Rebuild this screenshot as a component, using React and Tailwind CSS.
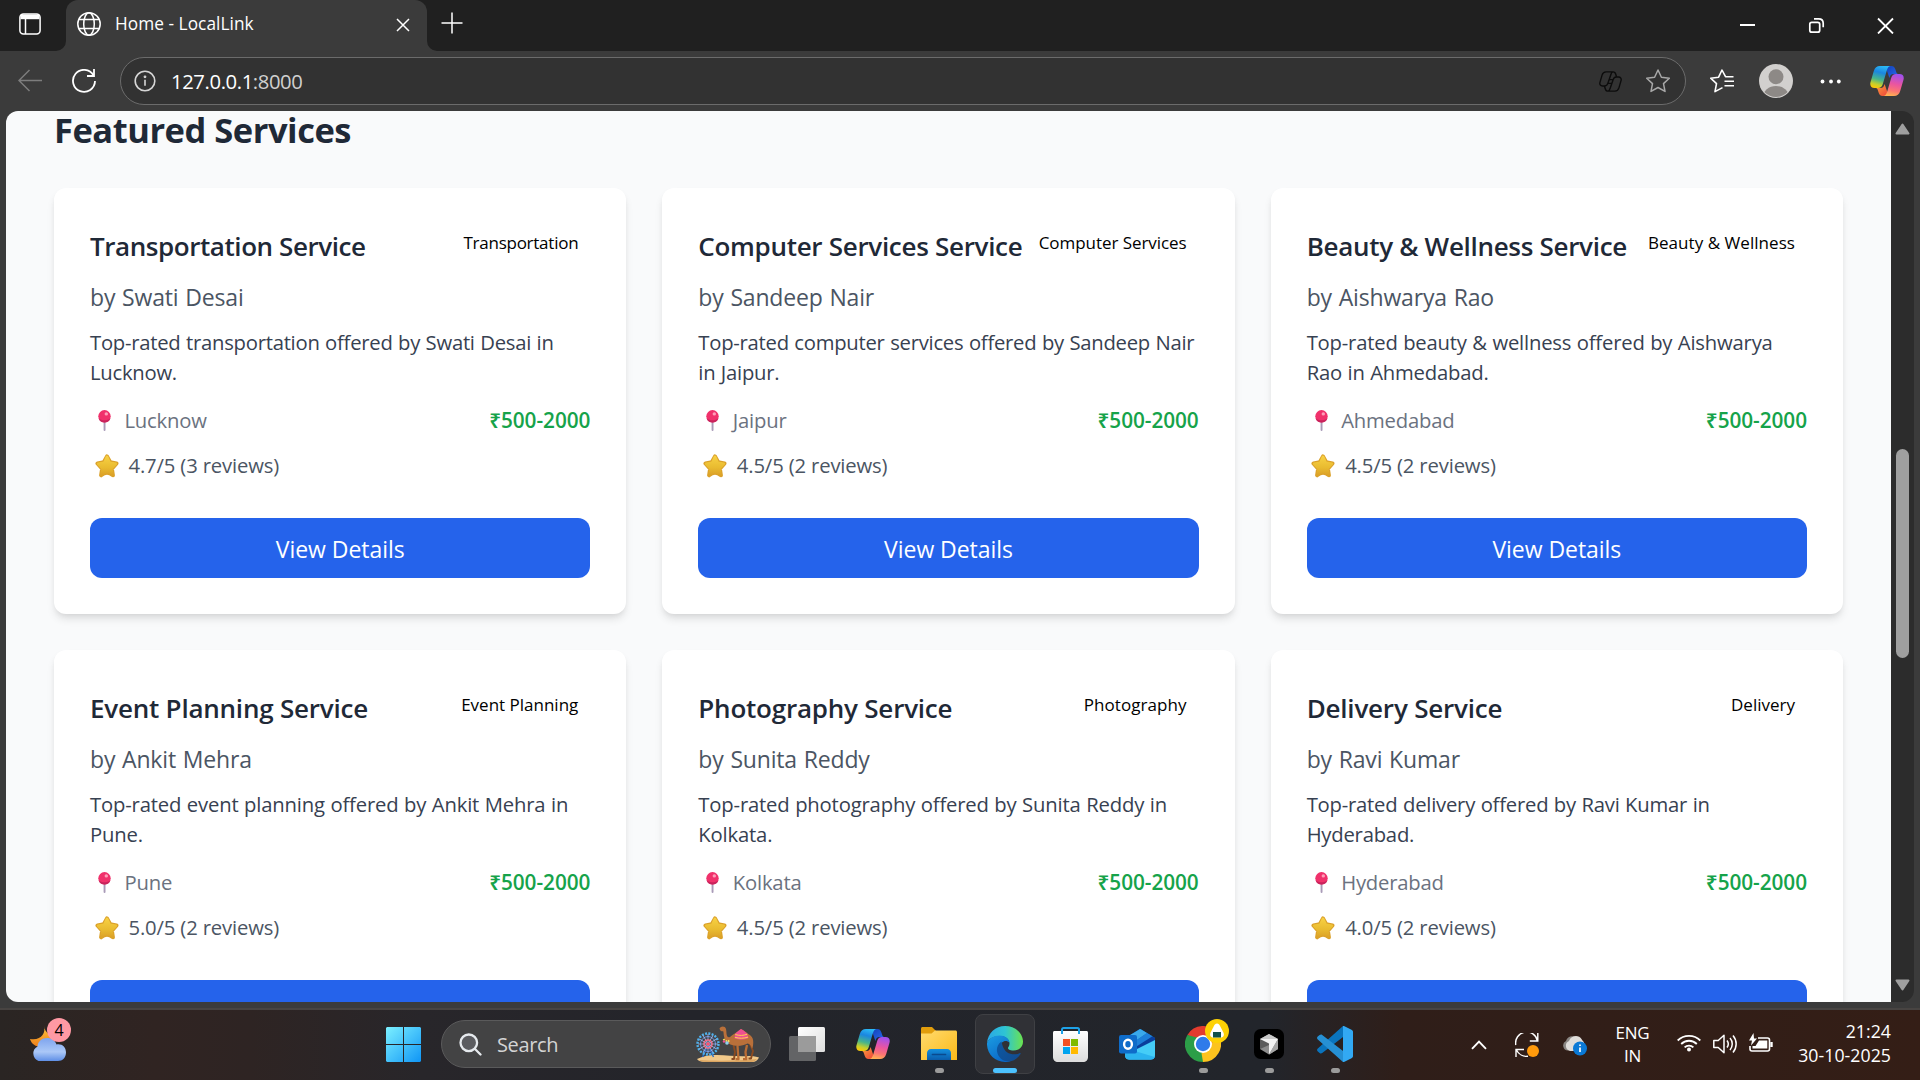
import React, { useId } from "react";

const services = [
  { category: "Transportation", provider: "Swati Desai", city: "Lucknow", rating: "4.7", reviews: 3, title: "tracking-[-0.43px]", badge: "tracking-[-0.25px]", body: "tracking-[-0.25px]" },
  { category: "Computer Services", provider: "Sandeep Nair", city: "Jaipur", rating: "4.5", reviews: 2, title: "tracking-[-0.3px]", badge: "tracking-[-0.05px]", body: "tracking-[-0.25px]" },
  { category: "Beauty & Wellness", provider: "Aishwarya Rao", city: "Ahmedabad", rating: "4.5", reviews: 2, title: "tracking-[-0.3px]", badge: "tracking-[0.05px]", body: "tracking-[-0.2px]" },
  { category: "Event Planning", provider: "Ankit Mehra", city: "Pune", rating: "5.0", reviews: 2, title: "tracking-[-0.22px]", badge: "tracking-[0px]", body: "tracking-[-0.17px]" },
  { category: "Photography", provider: "Sunita Reddy", city: "Kolkata", rating: "4.5", reviews: 2, title: "tracking-[-0.22px]", badge: "tracking-[0.08px]", body: "tracking-[-0.17px]" },
  { category: "Delivery", provider: "Ravi Kumar", city: "Hyderabad", rating: "4.0", reviews: 2, title: "tracking-[-0.2px]", badge: "tracking-[0px]", body: "tracking-[-0.22px]" },
];

/* ---------- icons ---------- */

function Copilot({ className }) {
  const id = useId();
  return (
    <svg viewBox="0 0 34 30" className={className}>
      <defs>
        <linearGradient id={id + "a"} x1="0.6" y1="0" x2="0.35" y2="1">
          <stop offset="0" stopColor="#2bb8f5" />
          <stop offset="0.3" stopColor="#1b86e0" />
          <stop offset="0.62" stopColor="#48b58a" />
          <stop offset="0.85" stopColor="#c6cf2c" />
          <stop offset="1" stopColor="#f8c80c" />
        </linearGradient>
        <linearGradient id={id + "b"} x1="0.6" y1="0" x2="0.4" y2="1">
          <stop offset="0" stopColor="#a050ee" />
          <stop offset="0.45" stopColor="#ea55a0" />
          <stop offset="0.75" stopColor="#fb7474" />
          <stop offset="1" stopColor="#ffb152" />
        </linearGradient>
        <linearGradient id={id + "c"} x1="0" y1="0" x2="1" y2="1">
          <stop offset="0" stopColor="#123fb5" />
          <stop offset="1" stopColor="#2a6cf0" />
        </linearGradient>
        <linearGradient id={id + "d"} x1="0" y1="0" x2="1" y2="1">
          <stop offset="0" stopColor="#fba43c" />
          <stop offset="1" stopColor="#ee3f3a" />
        </linearGradient>
      </defs>
      <path d="M15 0h6.500c2.200 0 3.300 1.400 4 3.700l.8 2.500c.4 1.200 1.100 1.800 2.300 1.800h-5c-2.600 0-3.500 1.500-4.200 4L17 5z" fill={`url(#${id}c)`} />
      <path d="M19 30h-6.500c-2.200 0-3.300-1.400-4-3.700l-.8-2.500C7.300 22.600 6.600 22 5.400 22h5c2.600 0 3.500-1.500 4.200-4L17 25z" fill={`url(#${id}d)`} />
      <path d="M10 0h10.500c-2.200.5-3 2.300-3.700 4.500L12.800 18c-.8 2.600-2.200 4-4.800 4H4.500C1.200 22-.4 19.600.5 16.300L3.800 5C4.800 1.700 6.900 0 10 0z" fill={`url(#${id}a)`} />
      <path d="M24 30H13.500c2.200-.5 3-2.300 3.700-4.500L21.200 12c.8-2.600 2.200-4 4.800-4h3.500c3.300 0 4.900 2.400 4 5.700L30.200 25c-1 3.300-3.100 5-6.200 5z" fill={`url(#${id}b)`} />
    </svg>
  );
}

function CopilotOutline() {
  return (
    <svg viewBox="-1 -1 36 32" className="h-[21px] w-[23px]" fill="none" stroke="#0c0c0c" strokeWidth="2.200" strokeLinejoin="round">
      <path d="M10 0h11c2.500 0 3.500 1.200 4.200 3.700L26.500 8M17.500 4.500 12.800 18c-.8 2.600-2.200 4-4.800 4H4.500C1.200 22-.4 19.600.5 16.300L3.800 5C4.800 1.700 6.900 0 10 0M20.500 0c-2 .6-2.600 2.700-3 4.500" />
      <path d="M24 30H13c-2.500 0-3.500-1.200-4.200-3.700L7.500 22M16.500 25.500 21.200 12c.8-2.600 2.200-4 4.800-4h3.500c3.300 0 4.900 2.400 4 5.700L30.200 25c-1 3.300-3.100 5-6.200 5M13.500 30c2-.6 2.600-2.700 3-4.500M13 18h6M15 12h6" />
    </svg>
  );
}

function PinEmoji() {
  return (
    <svg viewBox="0 0 13 21" className="h-[21px] w-[13px]">
      <rect x="5.600" y="11" width="1.900" height="10" rx=".9" fill="#a99bb8" />
      <circle cx="6.500" cy="6.300" r="6.200" fill="#f0316b" />
      <path d="M.6 8.200a6.200 6.200 0 0 0 11.800 0C9.500 11 3.500 11 .6 8.200z" fill="#c9235c" />
      <circle cx="8.300" cy="3.900" r="1.700" fill="#ff9db8" />
    </svg>
  );
}

function StarEmoji() {
  return (
    <svg viewBox="0 0 24 24" className="mt-px h-[24px] w-[24px]">
      <defs><linearGradient id="star" x1="0" y1="0" x2="0" y2="1"><stop offset="0" stopColor="#f6cf42" /><stop offset=".6" stopColor="#e9bb30" /><stop offset="1" stopColor="#dda428" /></linearGradient></defs>
      <path d="M12 2.400 15.200 8.300l6.300 1.200-4.600 5.200 1 6.600q-3-2.600-5.900-2.600t-5.900 2.600l1-6.600-4.600-5.200 6.300-1.200z" fill="#dba12a" stroke="#dba12a" strokeWidth="4" strokeLinejoin="round" />
      <path d="M12 2.900 14.800 8.800l6 1-4.400 4.700.9 6q-2.700-2.200-5.300-2.200t-5.300 2.200l.9-6-4.400-4.700 6-1z" fill="url(#star)" stroke="url(#star)" strokeWidth="2.600" strokeLinejoin="round" />
    </svg>
  );
}

/* ---------- browser chrome ---------- */

function TabStrip() {
  return (
    <div className="flex h-[51px] bg-[#202020]">
      <div className="flex w-[66px] items-start pl-[19px] pt-[13px]">
        <svg viewBox="0 0 22 22" className="size-[22px]" fill="none" stroke="#fff" strokeWidth="1.500">
          <rect x=".9" y=".9" width="20.200" height="20.200" rx="3.500" />
          <path d="M1.500 1.500h19v4.700h-19z" fill="#fff" stroke="none" />
          <path d="M6.500 6v15" />
        </svg>
      </div>
      <div className="relative flex w-[361px] rounded-t-[12px] bg-[#3b3b3b] pl-[11px]">
        <svg viewBox="0 0 10 10" className="absolute bottom-0 -left-[10px] size-[10px]"><path d="M10 0v10H0A10 10 0 0 0 10 0z" fill="#3b3b3b" /></svg>
        <svg viewBox="0 0 10 10" className="absolute bottom-0 -right-[10px] size-[10px]"><path d="M0 0v10h10A10 10 0 0 1 0 0z" fill="#3b3b3b" /></svg>
        <svg viewBox="0 0 24 24" className="mt-3 size-6" fill="none" stroke="#fff" strokeWidth="1.500">
          <circle cx="12" cy="12" r="11.200" />
          <ellipse cx="12" cy="12" rx="5.300" ry="11.200" />
          <path d="M1.700 7.600h20.600M1.700 16.400h20.600" />
        </svg>
        <span className="ml-[14px] flex-1 text-[17.25px] leading-[47px] tracking-[0.05px] text-white">Home - LocalLink</span>
        <svg viewBox="0 0 14 14" className="mt-[18px] mr-[17px] size-[14px]" stroke="#fff" strokeWidth="1.500"><path d="M1 1l12 12M13 1 1 13" /></svg>
      </div>
      <svg viewBox="0 0 22 22" className="mt-3 ml-[14px] size-[22px]" stroke="#fff" strokeWidth="1.500"><path d="M11 .5v21M.5 11h21" /></svg>
      <div className="flex-1" />
      <div className="flex gap-[52px] pt-[17px] pr-[26px]">
        <svg viewBox="0 0 17 17" className="size-[17px]" stroke="#fff" strokeWidth="2"><path d="M1 8h15" /></svg>
        <svg viewBox="0 0 17 17" className="size-[17px]" fill="none" stroke="#fff" strokeWidth="1.700">
          <rect x="1.800" y="5.300" width="9.900" height="9.900" rx="2" />
          <path d="M6 1.800h4.700c2.900 0 4.500 1.600 4.500 4.500v4" />
        </svg>
        <svg viewBox="0 0 17 17" className="size-[17px]" stroke="#fff" strokeWidth="1.800"><path d="M1 1.500l15 15M16 1.500l-15 15" /></svg>
      </div>
    </div>
  );
}

function Toolbar() {
  return (
    <div className="flex h-[60px] items-center bg-[#3b3b3b] pl-[18px] pr-4">
      <svg viewBox="0 0 24 24" className="size-6" fill="none" stroke="#7d7d7d" strokeWidth="1.500"><path d="M24 11.500H1M11.500 1 1 11.500 11.500 22" /></svg>
      <svg viewBox="0 0 24 24" className="ml-[30px] size-6" fill="none" stroke="#fff" strokeWidth="1.800">
        <path d="M21.500 6.300A11 11 0 1 0 23 12" />
        <path d="M22 0v7h-7" />
      </svg>
      <div className="ml-6 flex h-12 w-[1566px] items-center rounded-full border-[1.500px] border-[#6b6b6b] bg-[#323232] pl-[13px] pr-[15px]">
        <svg viewBox="0 0 22 22" className="size-[22px]" fill="none" stroke="#d6d6d6" strokeWidth="1.600">
          <circle cx="11" cy="11" r="9.800" />
          <path d="M11 9.800v6" />
          <circle cx="11" cy="6.800" r=".6" fill="#d6d6d6" />
        </svg>
        <span className="ml-[15px] flex-1 pt-px text-[20.25px] tracking-[-0.4px] text-white">127.0.0.1<span className="text-[#d0d0d0]">:8000</span></span>
        <CopilotOutline />
        <svg viewBox="0 0 24 24" className="ml-6 size-6" fill="none" stroke="#a8a8a8" strokeWidth="1.500" strokeLinejoin="round">
          <path d="M12 1l3.400 7.200 7.900 1-5.800 5.400 1.500 7.800-7-3.900-7 3.900 1.500-7.800L.7 9.200l7.900-1z" />
        </svg>
      </div>
      <svg viewBox="0 0 24 24" className="ml-6 size-6" fill="none" stroke="#fff" strokeWidth="1.600" strokeLinejoin="round">
        <path d="M23.500 7.700h-8L12 1 8.600 8.200l-7.900 1 5.800 5.400L5 22.600l7.500-4M14.500 12.200H24M14.500 16.700H24" />
      </svg>
      <svg viewBox="0 0 34 34" className="ml-[25px] size-[34px]">
        <defs><clipPath id="avatar"><circle cx="17" cy="17" r="16" /></clipPath></defs>
        <circle cx="17" cy="17" r="17" fill="#d2d0ce" />
        <g fill="#8d8986" clipPath="url(#avatar)"><circle cx="17" cy="12.700" r="7.500" /><ellipse cx="17" cy="33" rx="13" ry="11" /></g>
      </svg>
      <svg viewBox="0 0 22 6" className="ml-[27px] h-[6px] w-[22px]" fill="#fff"><circle cx="2.500" cy="3.500" r="1.900" /><circle cx="11" cy="3.500" r="1.900" /><circle cx="18.800" cy="3.500" r="1.900" /></svg>
      <Copilot className="ml-[28px] h-[30px] w-[34px] shrink-0" />
    </div>
  );
}

/* ---------- page ---------- */

function ServiceCard({ service }) {
  const { category, provider, city, rating, reviews, title, badge, body } = service;
  return (
    <article className="h-[426px] rounded-[12px] bg-white px-9 pt-[37px] shadow-[0_6px_9px_-1.500px_rgba(0,0,0,0.1),0_3px_6px_-3px_rgba(0,0,0,0.1)]">
      <div className="mb-3 flex h-[42px] items-start justify-between whitespace-nowrap">
        <h3 className={`text-[26px] font-semibold leading-[42px] text-[#1f2937] ${title}`}>{`${category} Service`}</h3>
        <span className={`px-3 py-[6px] text-[17px] leading-6 text-black ${badge}`}>{category}</span>
      </div>
      <p className="mb-3 text-[23px] leading-9 tracking-[-0.17px] text-[#4b5563] [word-spacing:1px]">{`by ${provider}`}</p>
      <p className={`mb-[18px] text-[20.25px] leading-[30px] text-[#374151] [word-spacing:0.5px] ${body}`}>
        {`Top-rated ${category.toLowerCase()} offered by ${provider} in ${city}.`}
      </p>
      <div className="mb-[15px] flex items-center justify-between leading-[30px]">
        <span className="flex items-center gap-[13.500px] pl-2 text-[20.25px] tracking-[-0.2px] text-[#6b7280]"><PinEmoji />{city}</span>
        <span className="pt-px text-[20.75px] font-semibold leading-[29px] tracking-[-0.05px] text-[#16a34a]">₹500-2000</span>
      </div>
      <div className="mb-[38px] flex h-[30px] items-center gap-[10px] pl-[4.500px] text-[20.25px] leading-[30px] tracking-[-0.15px] text-[#4b5563]">
        <StarEmoji />{`${rating}/5 (${reviews} reviews)`}
      </div>
      <button className="block h-[60px] w-full rounded-[12px] bg-[#2563eb] pt-[3px] text-[23px] leading-[57px] tracking-[-0.05px] text-white">View Details</button>
    </article>
  );
}

function Scrollbar() {
  return (
    <div className="flex w-[23px] flex-col items-center rounded-r-[12px] bg-[#2c2c2c] pt-3 pb-[11px]">
      <svg viewBox="0 0 15 12" className="h-3 w-[15px]"><path d="M7.500 1.500 13.500 10.500h-12z" fill="#9f9f9f" stroke="#9f9f9f" strokeWidth="2" strokeLinejoin="round" /></svg>
      <div className="mt-[314px] h-[209px] w-[13px] rounded-full bg-[#9f9f9f]" />
      <div className="flex-1" />
      <svg viewBox="0 0 15 12" className="h-3 w-[15px]"><path d="M7.500 10.500 13.500 1.500h-12z" fill="#9f9f9f" stroke="#9f9f9f" strokeWidth="2" strokeLinejoin="round" /></svg>
    </div>
  );
}

/* ---------- taskbar ---------- */

function Weather() {
  return (
    <div className="relative ml-[30px] h-[44px] w-[42px]">
      <svg viewBox="0 0 42 44" className="h-[44px] w-[42px]">
        <defs>
          <linearGradient id="cloud" x1="0" y1="0" x2="0" y2="1"><stop offset="0" stopColor="#7ea4ee" /><stop offset=".6" stopColor="#abc8f7" /><stop offset="1" stopColor="#5f8fe6" /></linearGradient>
          <linearGradient id="moon" x1="0" y1="0" x2="0" y2="1"><stop offset="0" stopColor="#fbc43a" /><stop offset="1" stopColor="#ee7f1b" /></linearGradient>
        </defs>
        <path d="M14 8c2 7-3 15-14 13 2 7 9 9 15 7l13-9C21 19 15 15 14 8z" fill="url(#moon)" />
        <path d="M8.500 43a8 8 0 0 1-1-14.500C8 23 12 20 17 20c5 0 8 2.500 9.500 6.500C32 25.500 36 29 36 34.500c0 5-3.500 8.500-8 8.500z" fill="url(#cloud)" />
      </svg>
      <span className="absolute right-[1px] top-0 flex size-6 items-center justify-center rounded-full bg-[#ff99a4] text-[16px] text-black">4</span>
    </div>
  );
}

function WindowsLogo() {
  return (
    <svg viewBox="0 0 35 35" className="size-[35px]">
      <defs><linearGradient id="win" x1="0" y1="0" x2="1" y2="1"><stop offset="0" stopColor="#7cf0ff" /><stop offset=".5" stopColor="#46c3fb" /><stop offset="1" stopColor="#0f95f5" /></linearGradient></defs>
      <path d="M1 0h16v17H0V1zM18 0h16l1 1v16H18zM0 18h17v17H1l-1-1zM18 18h17v16l-1 1H18z" fill="url(#win)" />
    </svg>
  );
}

function FestivalArt() {
  const spokes = [0, 30, 60, 90, 120, 150];
  return (
    <svg viewBox="0 0 64 37" className="h-[37px] w-[64px]">
      <path d="M1 33c7-3 13-4.500 20-4 12 0 20 2 32 1 4 0 8 .6 10 1.500-1 2-3 4.500-6 4.500H10c-5 0-8-1-9-3z" fill="#f2c98a" />
      <path d="M3 34c14 1 40 1 58-1-2 2-3 3-5 3H10c-3 0-6-.8-7-2z" fill="#dba561" />
      <path d="M12 19 6.500 31M12 19l5.500 12" stroke="#2f6fc4" strokeWidth="1.400" />
      <g fill="none" strokeWidth="1">
        <circle cx="12" cy="18" r="10.500" stroke="#4fb2ee" strokeWidth="2.400" strokeDasharray="2 1.300" />
        <circle cx="12" cy="18" r="7.500" stroke="#6a8fe0" />
        {spokes.map((a) => <path key={a} d="M2 18h20" stroke="#9fb8ec" strokeWidth=".8" transform={`rotate(${a} 12 18)`} />)}
        <circle cx="12" cy="18" r="4" stroke="#f0718c" strokeWidth="1.600" />
      </g>
      <circle cx="12" cy="18" r="1.800" fill="#ff4f6e" />
      <g fill="none" stroke="#8a4a20" strokeWidth="1.900" strokeLinejoin="round">
        <path d="M37.500 19 39 26l-1 7h-2.500M54 18l3 7-2 7.500h-2.500" />
      </g>
      <g fill="none" stroke="#b86c34" strokeWidth="2.300" strokeLinejoin="round">
        <path d="M41.500 20 42 27l.5 6.200H39.500M51 19l-1.500 7 .8 7.200H47" />
      </g>
      <path d="M23.500 2.500c1-2 3.500-2.700 5.200-1.500 1.600 1 1.600 3.500 1.800 6.500.2 3 1.500 4.500 3.500 3.500C37 8.500 41 6 45 3c4 1.800 6.500 5 9.500 6.500 3 2.500 3 6 2.500 10-.2 2-.8 3-1.200 3-.8-3-1.800-4.500-4.300-5-4 2-9 3-13.500 2-5-1-9-4-10-9-.6-3-.3-4.500-.8-5.300-1.200.2-3 .2-3.700-2.700z" fill="#b9703a" />
      <path d="M39 8c2-2.200 4-3.500 6-5 2.500 1.200 4 2.800 6 4.600l1.500 4.500c-4.500 2-10 2-14 .5z" fill="#ee4f91" />
      <path d="M39.300 8.500c4 1.300 8 1.200 12-.3M39 11.300c4 1.300 9 1.200 13-.2" stroke="#ffd34f" strokeWidth="1" fill="none" />
      <path d="M27.500 13c1.500 2 3.800 2.500 6.500 1.500" stroke="#f4e05a" strokeWidth="2" fill="none" strokeDasharray="1.500 1" />
      <circle cx="31" cy="17" r="1.800" fill="#8fd0f0" /><circle cx="28" cy="15.500" r="1.200" fill="#ee4f91" />
    </svg>
  );
}

function SearchBox() {
  return (
    <div className="flex h-12 w-[330px] items-center rounded-full border border-[#5a5a5b] bg-[#434344] pl-[17px] pr-[10px]">
      <svg viewBox="0 0 23 23" className="size-[23px]" fill="none" stroke="#e6eaee" strokeWidth="2.300" strokeLinecap="round">
        <circle cx="9.800" cy="9.800" r="8.300" fill="#5b5c60" /><path d="M16 16l5.500 5.500" />
      </svg>
      <span className="ml-[15px] flex-1 pt-px text-[20px] tracking-[-0.35px] text-[#d4d4d4]">Search</span>
      <FestivalArt />
    </div>
  );
}

function TaskView() {
  return (
    <svg viewBox="0 0 36 34" className="h-[34px] w-9">
      <defs><linearGradient id="tv" x1="0" y1="0" x2="1" y2="1"><stop offset="0" stopColor="#fff" /><stop offset="1" stopColor="#dedede" /></linearGradient></defs>
      <rect y="9" width="27" height="25" rx="1.500" fill="#636466" />
      <rect x="9" width="27" height="25" rx="1.500" fill="url(#tv)" />
      <path d="M9 9h18v16H9z" fill="#9b9b9b" />
    </svg>
  );
}

function Explorer() {
  return (
    <svg viewBox="0 0 36 34" className="h-[34px] w-9">
      <defs>
        <linearGradient id="fold" x1="0" y1="0" x2="1" y2="1"><stop offset="0" stopColor="#ffdb6e" /><stop offset="1" stopColor="#fcb918" /></linearGradient>
        <linearGradient id="tray" x1="0" y1="0" x2="0" y2="1"><stop offset="0" stopColor="#1490df" /><stop offset="1" stopColor="#0b5cab" /></linearGradient>
      </defs>
      <path d="M0 1.500C0 .7.700 0 1.500 0H11l4 4-3 5H0z" fill="#e19d0c" />
      <path d="M0 6.500h10.500L14 3.500h20.500c.8 0 1.500.7 1.500 1.500v28H0z" fill="url(#fold)" />
      <path d="M6 33v-7c0-2.300 1.700-4 4-4h16c2.300 0 4 1.700 4 4v7z" fill="url(#tray)" />
      <path d="M11.500 27.500h13" stroke="#0a4a8e" strokeWidth="1.700" strokeLinecap="round" />
    </svg>
  );
}

function Edge() {
  return (
    <svg viewBox="0 0 36 36" className="size-9">
      <defs>
        <linearGradient id="e1" x1="0" y1=".4" x2="1" y2=".4"><stop offset="0" stopColor="#2aa7e6" /><stop offset=".5" stopColor="#2ec4d4" /><stop offset="1" stopColor="#6be34f" /></linearGradient>
        <linearGradient id="e2" x1="0" y1="0" x2=".6" y2="1"><stop offset="0" stopColor="#1b9de2" /><stop offset="1" stopColor="#0a67c8" /></linearGradient>
        <linearGradient id="e3" x1="0" y1="0" x2="1" y2="1"><stop offset="0" stopColor="#0c59a4" /><stop offset="1" stopColor="#124a8e" /></linearGradient>
      </defs>
      <path d="M0 17C.8 7 8.500 0 18 0c11 0 18 8 18 15.500 0 5.500-4 9-9.500 9-4 0-5.500-1.200-5.500-2.500 0-1.200 1.500-1.600 1.500-4.500 0-4-4-7.500-9.500-7.500C7 10 2 12.500 0 17z" fill="url(#e1)" />
      <path d="M0 17c2-4.500 6.500-7.500 12.500-7.500 5.500 0 9.500 3 10 7-3.500-3.500-9.500-1-9.500 5 0 7 5.500 13 11.500 13.300C22.500 35.700 20.500 36 18 36 7.500 36-.5 27.500 0 17z" fill="url(#e2)" />
      <path d="M14.500 15.500c-4 2.500-5 7-4.500 10 .8 5 5 10 12 10 5-.5 9-3.500 11.500-7.500.5-.9-.3-1.200-1-.8-3.500 1.700-9 1.600-12.500-1-3.500-2.700-4.500-6-5.500-10.700z" fill="url(#e3)" />
    </svg>
  );
}

function Store() {
  return (
    <svg viewBox="0 0 35 35" className="mr-px size-[35px]">
      <defs><linearGradient id="bag" x1="0" y1="0" x2="0" y2="1"><stop offset="0" stopColor="#fff" /><stop offset="1" stopColor="#dcdcdc" /></linearGradient></defs>
      <path d="M0 5.500C0 4.700.7 4 1.500 4h32c.8 0 1.500.7 1.500 1.500V30c0 3-2 5-5 5H5c-3 0-5-2-5-5z" fill="url(#bag)" />
      <path d="M9 7V2.500C9 1.600 9.600 1 10.500 1h14c.9 0 1.500.6 1.500 1.500V7" fill="none" stroke="#1ea2e8" strokeWidth="2" />
      <path d="M10 12h7v7h-7z" fill="#f25022" /><path d="M18 12h7v7h-7z" fill="#7fba00" />
      <path d="M10 20h7v7h-7z" fill="#00a4ef" /><path d="M18 20h7v7h-7z" fill="#ffb900" />
    </svg>
  );
}

function Outlook() {
  return (
    <svg viewBox="0 0 36 31" className="h-[31px] w-9">
      <path d="M6 9 20 .5c.8-.5 1.600-.5 2.400 0L36 9v17c0 3-1.500 4.500-4.500 4.500h-21C7.500 30.500 6 29 6 26z" fill="#1273c9" />
      <path d="M8 8 20 .7c.8-.5 1.600-.5 2.400 0L28 4 12 15z" fill="#3aa9ea" />
      <path d="M33 7 36 9v3L18 23l-5-7z" fill="#0a3f9c" />
      <path d="M28 4l5.500 3.300L15 19l-3-4z" fill="#1d7fd8" />
      <path d="M36 11v15c0 3-1.500 4.500-4.500 4.500h-21C8 30.500 6 29 6 26z" fill="#45cdf7" />
      <path d="M6 19v7c0 3 1.500 4.500 4.500 4.500h21c2 0 3.500-.8 4.100-2.500z" fill="#2bb3ef" />
      <rect y="6" width="18" height="18.500" rx="2" fill="#0f6cc9" />
      <ellipse cx="9" cy="15.200" rx="3.900" ry="4.500" fill="none" stroke="#fff" strokeWidth="2.400" />
    </svg>
  );
}

function Chrome() {
  return (
    <div className="relative">
      <svg viewBox="0 0 36 36" className="size-9">
        <path d="M18 18 2.400 9A18 18 0 0 1 33.600 9z" fill="#e33b2e" />
        <path d="M18 18 33.600 9A18 18 0 0 1 18 36z" fill="#fcc31e" />
        <path d="M18 18 18 36A18 18 0 0 1 2.400 9z" fill="#2c9e48" />
        <path d="M18 9h15.600L26 18z" fill="#e33b2e" />
        <path d="M25.800 22.500 18 36l-1.500-9z" fill="#fcc31e" />
        <path d="M10.200 22.500 2.400 9 14 12z" fill="#2c9e48" />
        <circle cx="18" cy="18" r="9" fill="#fff" /><circle cx="18" cy="18" r="7.200" fill="#2f7bea" />
      </svg>
      <svg viewBox="0 0 24 24" className="absolute -right-2 -top-[7px] size-6">
        <circle cx="12" cy="12" r="12" fill="#fdd105" />
        <path d="M12 4.500c1.500 0 2.300 1 3.200 2.700l3.200 6.300c1.200 2.800 0 5-2.600 5H8.200c-2.600 0-3.800-2.200-2.600-5l3.200-6.300C9.700 5.500 10.500 4.500 12 4.500z" fill="#fff" />
        <path d="M8 13h8v5.500H8z" fill="#12524a" />
      </svg>
    </div>
  );
}

function CursorApp() {
  return (
    <svg viewBox="0 0 30 30" className="size-[30px]">
      <rect width="30" height="30" rx="6.500" fill="#000" />
      <path d="M15 5 24 10v10l-9 5.500L6 20V10z" fill="#8d8d8d" />
      <path d="M15 5 24 10l-9 2L6 10z" fill="#c9c9c9" />
      <path d="M6 10l9 2v4l-9 4z" fill="#5c5c5c" />
      <path d="M6 10 24 10 15 25.500V14.500z" fill="#f2f2f2" />
      <path d="M24 10v10l-9 5.500z" fill="#a5a5a5" />
    </svg>
  );
}

function VSCode() {
  return (
    <svg viewBox="0 0 36 36" className="size-9">
      <path d="M26 0 .8 22.500c-1 .9-1 2 0 2.900L2.600 27c.8.700 1.700.8 2.600.1L28 9.500z" fill="#0a74bd" />
      <path d="M26 36 .8 13.500c-1-.9-1-2-.1-2.900L2.600 9c.8-.7 1.700-.8 2.600-.1L28 26.500z" fill="#2690d4" />
      <path d="M26 36V0c.6 0 1 0 1.500.3l7 3.400c1 .5 1.500 1.300 1.500 2.300v24c0 1-.5 1.800-1.500 2.300l-7 3.400c-.5.300-1 .3-1.500.3z" fill="#32a9f3" />
    </svg>
  );
}

const apps = [
  { name: "taskview", Icon: TaskView },
  { name: "copilot", Icon: () => <Copilot className="h-[30px] w-[34px]" /> },
  { name: "explorer", Icon: Explorer, running: true },
  { name: "edge", Icon: Edge, active: true },
  { name: "store", Icon: Store },
  { name: "outlook", Icon: Outlook },
  { name: "chrome", Icon: Chrome, running: true },
  { name: "cursor", Icon: CursorApp, running: true },
  { name: "vscode", Icon: VSCode, running: true },
];

function AppButton({ Icon, running, active }) {
  return (
    <div className={active
      ? "relative mx-[3px] flex size-[60px] items-center justify-center rounded-[8px] border border-[#3f4044] bg-[#303136]"
      : "relative mx-[3px] flex size-[60px] items-center justify-center"}>
      <Icon />
      {active && <span className="absolute bottom-0 h-[5px] w-6 rounded-full bg-[#4cc2ff]" />}
      {running && <span className="absolute bottom-px h-[5px] w-[9px] rounded-full bg-[#9b9b9b]" />}
    </div>
  );
}

function Tray() {
  return (
    <div className="flex h-full items-center pr-[29px] pt-[2px] text-white">
      <svg viewBox="0 0 16 10" className="h-[10px] w-4" fill="none" stroke="#fff" strokeWidth="1.900"><path d="M1 8.800 8 1.500l7 7.300" /></svg>
      <svg viewBox="0 0 24 24" className="ml-7 mb-px size-6" fill="none" stroke="#fff" strokeWidth="1.400">
        <path d="M.8 12A11 11 0 0 1 22.500 8M22.800 0v8h-8M13 23.200A11 11 0 0 1 1.500 17M1 24v-7.500h8" />
        <circle cx="18" cy="18" r="6" fill="#ff9a0c" stroke="none" />
      </svg>
      <svg viewBox="0 0 24 22" className="ml-6 h-[22px] w-6">
        <path d="M5 16.500A5 5 0 0 1 3 7C4 2.500 9 1 12 3l-2 12z" fill="#8a8784" />
        <path d="M7 17a5.300 5.300 0 0 1-1-10C8 1 16 .5 18.500 5 19.500 7 22 8 21.500 12L12 17z" fill="#dfddda" />
        <circle cx="17" cy="14.500" r="7" fill="#0a79d6" />
        <path d="M17 13.500v4.500M17 10.500v1.500" stroke="#fff" strokeWidth="1.700" />
      </svg>
      <div className="ml-7 mb-[3px] flex w-[35px] flex-col items-center text-[17px] leading-[23px] tracking-[-0.2px]"><span>ENG</span><span>IN</span></div>
      <svg viewBox="0 0 24 18" className="ml-[27px] mb-1 h-[18px] w-6" fill="none" stroke="#fff" strokeWidth="1.800">
        <path d="M.7 6.500a16 16 0 0 1 22.600 0M4.200 10a11 11 0 0 1 15.600 0M7.600 13.400a6.300 6.300 0 0 1 8.800 0" />
        <circle cx="12" cy="15.500" r="2" fill="#fff" stroke="none" />
      </svg>
      <svg viewBox="0 0 24 20" className="ml-3 mb-[3px] h-5 w-6" fill="none" stroke="#fff" strokeWidth="1.500" strokeLinejoin="round">
        <path d="M.8 6.500h4.400L11 1.200v17.600l-5.800-5.300H.8zM14 6.500c1.500 2 1.500 5 0 7M17 4c3 3.500 3 8.500 0 12M20 1.500c4.200 5 4.200 12 0 17" />
      </svg>
      <svg viewBox="0 0 24 20" className="ml-3 mb-[5px] h-5 w-6" fill="none" stroke="#fff" strokeWidth="1.600">
        <path d="M9 5h9.500c1.300 0 2 .7 2 2v9c0 1.300-.7 2-2 2H3c-1.300 0-2-.7-2-2v-3" />
        <path d="M10 7.500h8.300v8H3.500v-2.500h3z" fill="#fff" stroke="none" />
        <path d="M22.500 9v5" strokeWidth="2.400" />
        <path d="M4.500 0 0 7.500h3L2 12.500l6-7H5z" fill="#fff" stroke="none" />
      </svg>
      <div className="ml-[24px] mb-[4px] flex w-[94px] flex-col items-end whitespace-nowrap text-[17.700px] leading-6 tracking-[0.05px]"><span>21:24</span><span>30-10-2025</span></div>
    </div>
  );
}

function Taskbar() {
  return (
    <div className="flex h-[72px] items-center border-t-2 border-[#484442] bg-[linear-gradient(90deg,#2a2523_0%,#302422_8%,#2e2423_13%,#28262a_22%,#23242a_36%,#22252b_66%,#2f1e19_73%,#341e16_100%)] pb-[2px]">
      <div className="flex w-[386px] pb-2"><Weather /></div>
      <WindowsLogo />
      <div className="w-5" />
      <SearchBox />
      <div className="ml-[3px] flex flex-1">{apps.map((a) => <AppButton key={a.name} {...a} />)}</div>
      <Tray />
    </div>
  );
}

export default function App() {
  return (
    <div className="flex h-[1080px] w-[1920px] flex-col overflow-hidden bg-[#3b3b3b] font-['Open_Sans','Noto_Sans',sans-serif]">
      <TabStrip />
      <Toolbar />
      <div className="mb-1.5 flex h-[891px] pl-1.5 pr-1.5">
        <main className="h-[891px] flex-1 overflow-hidden rounded-l-[12px] bg-[#f9fafb] px-12">
          <h2 className="mb-10 text-[34.500px] font-bold leading-[37px] tracking-[-0.48px] text-[#1f2937]">Featured Services</h2>
          <div className="grid grid-cols-3 gap-9">
            {services.map((s) => <ServiceCard key={s.category} service={s} />)}
          </div>
        </main>
        <Scrollbar />
      </div>
      <Taskbar />
    </div>
  );
}
